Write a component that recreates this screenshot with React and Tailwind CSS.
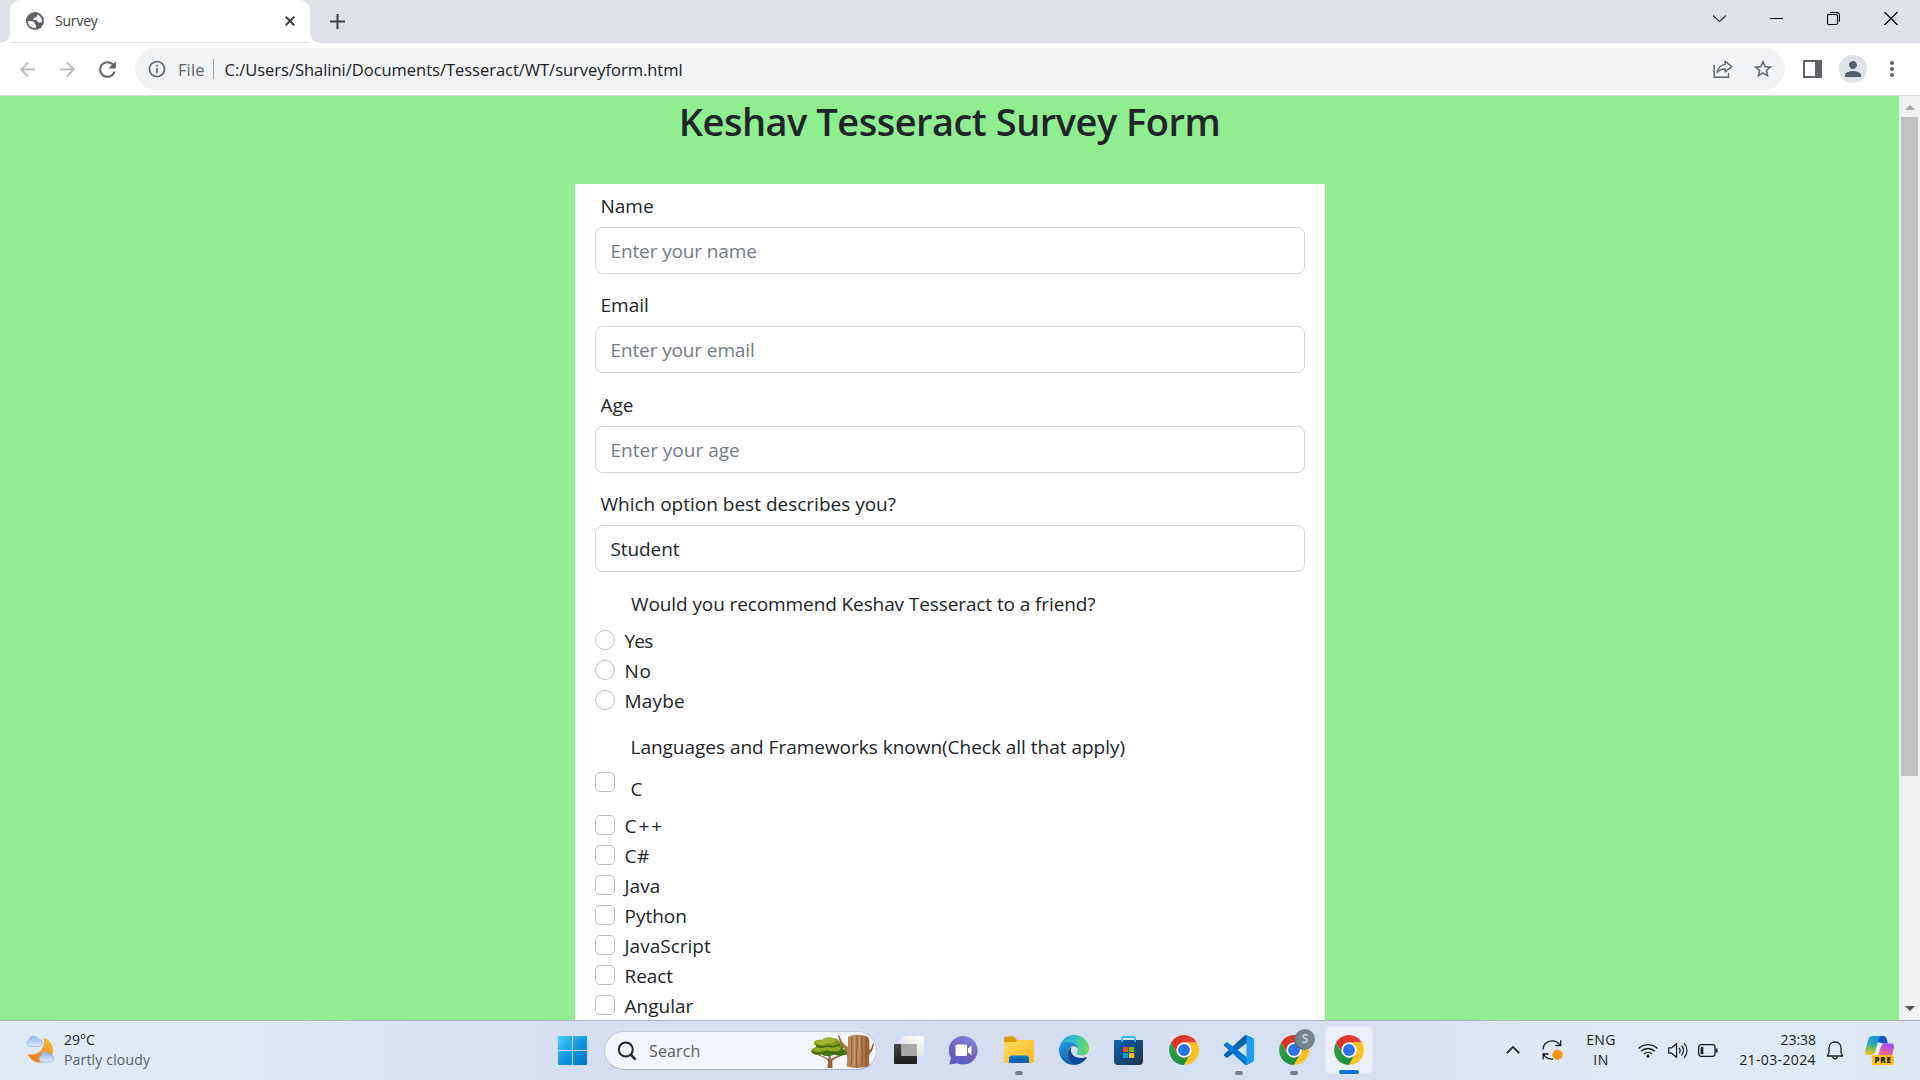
import React from 'react';
import {
  MdArrowBack,
  MdArrowForward,
  MdInfoOutline,
  MdMoreVert,
  MdPerson,
  MdRefresh,
  MdStarBorder,
} from 'react-icons/md';

function GlobeIcon() {
  return (
    <svg width="18" height="18" viewBox="0 0 18 18">
      <circle cx="9" cy="9" r="9" fill="#5f6368" />
      <path d="M10.500 2.200c.3 1.800-.3 2.700-1.900 2.900-.3 1.300-1.300 1.300-2 1.500.2 1.200 1 1.500 2.600 1.600 1.800.2 2.400 1.200 2.400 2.300h1.600c1.300 0 2-.5 2.600-.2-.6 3-3 5.300-6.100 5.600.3-1.400-.4-2-1-2.600-.8-.9-.4-2-.9-2.700C6.600 9.500 4.500 9.500 2 9.300 1.800 5.800 4.200 2.500 7.500 2c1-.2 2-.1 3 .2z" fill="#fff" opacity=".0" />
      <path d="M2 9.200c1.800-.2 3.800 0 5.300.4 1.500.5 1 2 2 2.800.8.6 1 1.800.4 3.500C5.500 16.300 2 13.200 2 9.200z" fill="#fff" />
      <path d="M11 2.400c.8 1.500-.2 2.900-2.200 2.900-.2 1.200-1 1.200-1.900 1.400.3 1 1.200 1.200 2.600 1.200 1.700 0 2.400 1.100 2.500 2.300.9.300 2.800.5 3.800-.1.600-3.600-1.500-6.700-4.800-7.700z" fill="#fff" />
    </svg>
  );
}

function TabStrip() {
  return (
    <div className="flex h-[43px] shrink-0 items-stretch bg-[#dee1e6]">
      <div className="flex w-[10px] items-end">
        <svg width="10" height="10" viewBox="0 0 10 10">
          <path d="M10 0v10H0A10 10 0 0 0 10 0z" fill="#fff" />
        </svg>
      </div>
      <div className="flex h-[42px] w-[300px] items-center rounded-t-[10px] bg-white pl-[16px] pr-[13px]">
        <GlobeIcon />
        <span className="ml-[11px] flex-1 pb-px text-[14px] leading-[20px] tracking-[-0.2px] text-[#3c4043]">Survey</span>
        <svg width="14" height="14" viewBox="0 0 14 14" stroke="#3c4043" strokeWidth="2">
          <path d="M2.800 2.800l8.400 8.400M11.200 2.800l-8.400 8.400" />
        </svg>
      </div>
      <div className="flex w-[20px] items-end">
        <svg width="10" height="10" viewBox="0 0 10 10">
          <path d="M0 0v10h10A10 10 0 0 1 0 0z" fill="#fff" />
        </svg>
      </div>
      <svg className="self-center" width="15" height="15" viewBox="0 0 15 15" stroke="#3c4043" strokeWidth="2">
        <path d="M7.500 0v15M0 7.500h15" />
      </svg>
      <div className="ml-auto flex h-[37px] items-center gap-[44px] pr-[22px]">
        <svg width="13" height="13" viewBox="0 0 13 13" fill="none" stroke="#222" strokeWidth="1.100">
          <path d="M0 3.400l6.500 6.200L13 3.400" />
        </svg>
        <svg width="13" height="13" viewBox="0 0 13 13" stroke="#000" strokeWidth="1">
          <path d="M0 6.500h13" />
        </svg>
        <svg width="13" height="13" viewBox="0 0 13 13" fill="none" stroke="#000" strokeWidth="1.100">
          <rect x=".5" y="2.500" width="10" height="10" rx="1.500" />
          <path d="M3 .5h6.500a3 3 0 0 1 3 3v6.300" />
        </svg>
        <svg width="14" height="13" viewBox="0 0 13 13" stroke="#000" strokeWidth="1.200">
          <path d="M0 0l13 13M13 0L0 13" />
        </svg>
      </div>
    </div>
  );
}

function Toolbar() {
  return (
    <div className="flex h-[53px] shrink-0 items-start border-b border-[#d5d7db] bg-white pt-[5px]">
      <div className="flex h-[42px] w-[135px] items-center gap-[17px] pl-[16px]">
        <MdArrowBack className="size-[23px] text-[#babcbe]" />
        <MdArrowForward className="size-[23px] text-[#babcbe]" />
        <MdRefresh className="-ml-px size-[25px] text-[#5f6368]" />
      </div>
      <div className="flex h-[42px] w-[1650px] items-center rounded-full bg-[#f1f3f4] pl-[12px] pr-[11px]">
        <MdInfoOutline className="size-[20px] text-[#5f6368]" />
        <span className="ml-[11px] pt-px text-[16.5px] leading-[22px] tracking-[0.1px] text-[#5f6368]">File</span>
        <div className="ml-[8px] h-[20px] w-px bg-[#9aa0a6]" />
        <span className="ml-[11px] flex-1 pt-px text-[16.5px] leading-[22px] tracking-[-0.02px] text-[#202124]">
          C:/Users/Shalini/Documents/Tesseract/WT/surveyform.html
        </span>
        <svg width="20" height="20" viewBox="0 0 20 20" fill="none" stroke="#5f6368" strokeWidth="1.400">
          <path d="M1.200 6v12.300h14.300V14" />
          <path d="M12.200 2.200l6.500 5.400-6.500 5.400V10c-3.600 0-6 1-8 3.600.7-4.200 3.200-7.500 8-8.200z" strokeLinejoin="round" />
        </svg>
        <MdStarBorder className="ml-[19px] size-[22px] text-[#5f6368]" />
      </div>
      <div className="flex h-[42px] flex-1 items-center pl-[18px]">
        <div className="h-[18px] w-[19px] border-2 border-r-[7px] border-[#5f6368]" />
        <div className="ml-[17px] flex size-[28px] items-center justify-center rounded-full bg-[#dee1e6]">
          <MdPerson className="size-[24px] text-[#53606f]" />
        </div>
        <MdMoreVert className="ml-[13px] size-[24px] text-[#5f6368]" />
      </div>
    </div>
  );
}

const FIELDS = [
  { label: 'Name', text: 'Enter your name', tone: 'text-[#737b83] tracking-[-0.12px]' },
  { label: 'Email', text: 'Enter your email', tone: 'text-[#737b83] tracking-[-0.12px]' },
  { label: 'Age', text: 'Enter your age', tone: 'text-[#737b83]' },
  { label: 'Which option best describes you?', text: 'Student', tone: 'text-[#212529] tracking-[-0.1px]' },
];

function Field({ label, text, tone }) {
  return (
    <div className="h-[99.5px]">
      <div className="pl-[6px]">{label}</div>
      <div className={`mt-[6px] flex h-[47px] items-center rounded-[7.5px] border border-[#ced4da] pl-[15px] pt-px ${tone}`}>
        {text}
      </div>
    </div>
  );
}

function Choice({ label, shape, tracking = '' }) {
  return (
    <div className="flex h-[30px]">
      <div className={`mt-[4px] size-[20px] border border-[#bfbfbf] bg-white ${shape}`} />
      <span className={`ml-[10px] ${tracking}`}>{label}</span>
    </div>
  );
}

const LANGUAGES = [
  ['C++', 'tracking-[2px]'],
  ['C#', 'tracking-[0.500px]'],
  ['Java', ''],
  ['Python', ''],
  ['JavaScript', ''],
  ['React', 'tracking-[-0.100px]'],
  ['Angular', ''],
];

function Page() {
  return (
    <div className="flex min-h-0 flex-1">
      <div className="flex flex-1 flex-col items-center overflow-hidden bg-[#90ee90]">
        <h1 className="mt-px h-[48px] shrink-0 text-[38px] font-semibold leading-[48px] tracking-[-0.500px] text-[#212529]">
          Keshav Tesseract Survey Form
        </h1>
        <div className="mt-[39px] h-[900px] w-[750px] shrink-0 bg-white px-[20px] pt-[6.600px] text-[19px] leading-[30px] text-[#212529]">
          {FIELDS.map((f) => (
            <Field key={f.label} {...f} />
          ))}
          <div className="mt-[0.400px] pl-[36.500px] tracking-[-0.100px]">Would you recommend Keshav Tesseract to a friend?</div>
          <div className="mt-[7px]">
            <Choice label="Yes" shape="rounded-full" tracking="tracking-[-0.800px]" />
            <Choice label="No" shape="rounded-full" tracking="tracking-[0.800px]" />
            <Choice label="Maybe" shape="rounded-full" tracking="tracking-[0.200px]" />
          </div>
          <div className="mt-[16px] pl-[36px] tracking-[-0.020px]">Languages and Frameworks known(Check all that apply)</div>
          <div className="mt-[6px] flex h-[43px]">
            <div className="mt-[4px] size-[20px] rounded-[5px] border border-[#bfbfbf] bg-white" />
            <span className="ml-[16px] mt-[6px]">C</span>
          </div>
          {LANGUAGES.map(([name, tracking]) => (
            <Choice key={name} label={name} shape="rounded-[5px]" tracking={tracking} />
          ))}
        </div>
      </div>
      <div className="flex w-[21px] flex-col items-center bg-[#f1f1f1]">
        <svg className="mt-[9px] shrink-0" width="10" height="5" viewBox="0 0 10 5">
          <path d="M5 0l5 5H0z" fill="#a3a3a3" />
        </svg>
        <div className="mt-[7px] h-[659px] w-[17px] bg-[#c1c1c1]" />
        <svg className="mb-[9px] mt-auto shrink-0" width="10" height="5" viewBox="0 0 10 5">
          <path d="M0 0h10L5 5z" fill="#505050" />
        </svg>
      </div>
    </div>
  );
}

function WeatherIcon() {
  return (
    <svg width="31" height="29" viewBox="0 0 31 29">
      <defs>
        <linearGradient id="moon" x1="0.700" y1="0" x2="0.300" y2="1">
          <stop offset="0" stopColor="#f6bf3c" />
          <stop offset="1" stopColor="#f17a1c" />
        </linearGradient>
        <linearGradient id="cloud" x1="0" y1="0" x2="0" y2="1">
          <stop offset="0" stopColor="#94b4ee" />
          <stop offset="1" stopColor="#dce9fc" />
        </linearGradient>
      </defs>
      <path d="M18.500 2.500c6 2 10 7.500 9.500 13.500-.6 7-6.500 11.500-13 11.500-5.500 0-10-3.300-12.500-8.500 5.500 1.500 11-.3 14-4.500 2.500-3.500 3-7.800 2-12z" fill="url(#moon)" />
      <path d="M4 11.500a3.600 3.600 0 0 1 0-6.600 4.800 4.800 0 0 1 9-1 4 4 0 0 1 2 7.600z" fill="url(#cloud)" stroke="#8eaee8" strokeWidth=".6" />
      <path d="M16 27a3.500 3.500 0 0 1 0-6.400 4.800 4.800 0 0 1 9-1 4 4 0 0 1 2 7.400z" fill="url(#cloud)" stroke="#7fa3e4" strokeWidth=".6" />
    </svg>
  );
}

function WindowsIcon() {
  return (
    <svg width="29" height="29" viewBox="0 0 29 29">
      <defs>
        <linearGradient id="win" x1="0" y1="0" x2="29" y2="29" gradientUnits="userSpaceOnUse">
          <stop offset="0" stopColor="#4ad0fb" />
          <stop offset=".55" stopColor="#1093e0" />
          <stop offset="1" stopColor="#0272cd" />
        </linearGradient>
      </defs>
      <path d="M1 0h13v14H0V1a1 1 0 0 1 1-1zM15 0h13a1 1 0 0 1 1 1v13H15zM0 15h14v14H1a1 1 0 0 1-1-1zM15 15h14v13a1 1 0 0 1-1 1H15z" fill="url(#win)" />
    </svg>
  );
}

function TreesIcon() {
  return (
    <svg width="64" height="34" viewBox="0 0 64 34">
      <defs>
        <linearGradient id="leaf" x1="0" y1="0" x2="0.200" y2="1">
          <stop offset="0" stopColor="#a5b52c" />
          <stop offset="1" stopColor="#47720b" />
        </linearGradient>
        <linearGradient id="bark" x1="0" y1="0" x2="1" y2="0">
          <stop offset="0" stopColor="#8c5c35" />
          <stop offset=".35" stopColor="#c08c5c" />
          <stop offset=".7" stopColor="#ae7848" />
          <stop offset="1" stopColor="#7c4d2b" />
        </linearGradient>
      </defs>
      <path d="M7.500 21c5 2.500 9 3 10.500 6l-.5 7h5l-.3-7c2-3 7-3.500 12-6.500l-.6-1c-5 2.500-9.500 3-12.500 5.500l-1-4h-1.500l-.5 4c-3-2.500-6-3-10.500-5z" fill="#9b6438" />
      <path d="M4 8c2-2 4-2.500 8-2 2-3 7-3.500 11-2 4 0 6 2 7.500 5 3 1 3.500 4 2.500 6l5 1c2 3-1 5-4 5-4 1.500-8 .5-10-.5-4 2-9 2-12 0-4 1-8 .5-10-1.500-2-2.500 0-4.500 2-5 2-1 3.500-1.500 3-2.500C4 11 3 10 4 8z" fill="url(#leaf)" />
      <path d="M5 8c3-2 6-.5 8-2 4-3 9-2 12 1 0 3-5 3-8 2-4 3-9 2-12-1zM2 16c3-3 8-2 11-2 4-3 9-2 13-2 3 0 5 2 4 4-5 2-10 1-13 0-5 2-11 3-15 0z" fill="#b1c436" opacity=".6" />
      <path d="M6 11.500c5 2.500 9 1.500 12 .5 4 1.500 8 1 12-1.500M3 18.500c6 2 10 1 14-1 6 2 12 2 17-.5" stroke="#45670b" strokeWidth="1.500" fill="none" />
      <path d="M29 1c2 5 3 8 9 12V3c4-3 14-3 20 0 2 3 1 8 1.500 13 2-1 2.500-4 3.500-7l.8.5c-.5 5-1.800 8-4.600 11-.4 6 .8 9-1 12-7 2-16 1.800-21.500 0 .8-6 .5-11-.2-16-4.500-4-7-8-8.500-15z" fill="url(#bark)" />
      <path d="M42 3c-1 8 1 18-1 29M47 2c1 9-2 20 0 31M52 2c-1 10 2 18-1 30M56 4c1 9-1 15 0 27" stroke="#7d4f2c" strokeWidth=".8" fill="none" />
      <path d="M44.500 3c-1 8 1 18-1 29M49.500 3c1 9-2 18 0 28" stroke="#dcae7e" strokeWidth=".7" fill="none" />
    </svg>
  );
}

function TaskViewIcon() {
  return (
    <svg width="30" height="30" viewBox="0 0 30 30">
      <defs>
        <linearGradient id="tvd" x1="0" y1="0" x2="0" y2="1">
          <stop offset="0" stopColor="#474747" />
          <stop offset="1" stopColor="#1b1b1b" />
        </linearGradient>
        <linearGradient id="tvl" x1="1" y1="0" x2="0.300" y2="1">
          <stop offset="0" stopColor="#fff" />
          <stop offset="1" stopColor="#dcdcdc" />
        </linearGradient>
      </defs>
      <rect x="0" y="9" width="23" height="20" rx="1" fill="url(#tvd)" />
      <rect x="7.500" y="1" width="22.500" height="20" rx="1" fill="url(#tvl)" />
      <path d="M7.500 9H22a1 1 0 0 1 1 1v11H8.500a1 1 0 0 1-1-1z" fill="#a8a8a8" />
    </svg>
  );
}

function ChatIcon() {
  return (
    <svg width="29" height="29" viewBox="0 0 29 29">
      <defs>
        <linearGradient id="chat" x1="0.800" y1="0" x2="0.300" y2="1">
          <stop offset="0" stopColor="#7f8be4" />
          <stop offset=".45" stopColor="#7a68bb" />
          <stop offset="1" stopColor="#5558c4" />
        </linearGradient>
      </defs>
      <path d="M14.500 0a14.300 14.300 0 1 1-6.300 27.200L.5 28.500l1.400-6.800A14.300 14.300 0 0 1 14.500 0z" fill="url(#chat)" />
      <rect x="6.500" y="8.500" width="11.500" height="11.500" rx="1.500" fill="#fff" />
      <path d="M19 12.500l3.500-3v9.800l-3.500-3z" fill="#fff" />
    </svg>
  );
}

function FolderIcon() {
  return (
    <svg width="30" height="28" viewBox="0 0 30 28">
      <defs>
        <linearGradient id="fold" x1="0" y1="0" x2="1" y2="1">
          <stop offset="0" stopColor="#ffdc63" />
          <stop offset="1" stopColor="#f8b91c" />
        </linearGradient>
        <linearGradient id="foldb" x1="0" y1="0" x2="0" y2="1">
          <stop offset="0" stopColor="#127ccb" />
          <stop offset="1" stopColor="#0d62ac" />
        </linearGradient>
      </defs>
      <path d="M0 2a1.500 1.500 0 0 1 1.500-1.500H10L13 4h15.500A1.500 1.500 0 0 1 30 5.500V12H0z" fill="#dd9d07" />
      <path d="M0 6h11.500L14 4h14.500A1.500 1.500 0 0 1 30 5.500v20a1.500 1.500 0 0 1-1.500 1.500h-27A1.500 1.500 0 0 1 0 25.500z" fill="url(#fold)" />
      <path d="M5 27v-4.500a3 3 0 0 1 3-3h14a3 3 0 0 1 3 3V27z" fill="url(#foldb)" />
      <path d="M8.500 23.300h13" stroke="#0a4784" strokeWidth="1" />
    </svg>
  );
}

function EdgeIcon() {
  return (
    <svg width="30" height="30" viewBox="0 0 30 30">
      <defs>
        <linearGradient id="edgeTop" x1="0" y1="0.400" x2="1" y2="0.500">
          <stop offset="0" stopColor="#2aa5dd" />
          <stop offset=".45" stopColor="#2fc0cf" />
          <stop offset="1" stopColor="#6ddd55" />
        </linearGradient>
        <linearGradient id="edgeLeft" x1="0" y1="0" x2="0.400" y2="1">
          <stop offset="0" stopColor="#2a9fe0" />
          <stop offset="1" stopColor="#0c5fae" />
        </linearGradient>
      </defs>
      <path d="M.6 11.500C2.500 4.800 8 0 15 0c8.500 0 15 6 15 13.500 0 4.500-3.200 7-7.200 7-3.400 0-5.300-1.200-5.300-2.500 0-1 1.500-1.600 1.500-4C19 11 15.500 8 10.500 8 6 8 2.500 9.500.6 11.500z" fill="url(#edgeTop)" />
      <path d="M0 15c0-4.500 4-8 9.500-8 5.600 0 9.500 3.300 9.500 7-.2 0-1.400-2.700-4.500-2.700-3.400 0-6 3.500-6 7.700 0 5.800 4.200 9.800 8.500 10.700-9.500 1.400-17-5.700-17-14.700z" fill="url(#edgeLeft)" />
      <path d="M12.500 12c-2.400 1.200-3.900 3.600-3.900 7 0 5.500 3.900 11 9.400 10.700 4.500-1 7.800-3.500 9.700-6.900.4-.7-.2-1.100-.8-.8-1.300.7-3 1.100-4.800 1.100-5.800 0-10.300-3.600-10.300-8 0-1.200.3-2.200.7-3.100z" fill="#11499a" />
    </svg>
  );
}

function StoreIcon() {
  return (
    <svg width="29" height="30" viewBox="0 0 29 30">
      <defs>
        <linearGradient id="store" x1="0" y1="0" x2="1" y2="1">
          <stop offset="0" stopColor="#0c64b0" />
          <stop offset="1" stopColor="#20304f" />
        </linearGradient>
      </defs>
      <path d="M0 6a1 1 0 0 1 1-1h27a1 1 0 0 1 1 1v20a4 4 0 0 1-4 4H4a4 4 0 0 1-4-4z" fill="url(#store)" />
      <path d="M8 7V3.300A1.300 1.300 0 0 1 9.300 2h10.400A1.300 1.300 0 0 1 21 3.300V7" fill="none" stroke="#35c1f1" strokeWidth="1.800" />
      <path fill="#f25022" d="M9 12h5.200v5H9z" />
      <path fill="#7fba00" d="M15 12h5.200v5H15z" />
      <path fill="#00a4ef" d="M9 18h5.200v5H9z" />
      <path fill="#ffb900" d="M15 18h5.200v5H15z" />
    </svg>
  );
}

function ChromeIcon() {
  return (
    <svg width="30" height="30" viewBox="0 0 48 48">
      <defs>
        <linearGradient id="chromeRed" x1="0" y1="0" x2="1" y2="0">
          <stop offset="0" stopColor="#d93025" />
          <stop offset="1" stopColor="#ea4335" />
        </linearGradient>
        <linearGradient id="chromeGreen" x1="0.700" y1="1" x2="0.200" y2="0">
          <stop offset="0" stopColor="#1e8e3e" />
          <stop offset="1" stopColor="#34a04c" />
        </linearGradient>
      </defs>
      <path d="M24 12h20.780A24 24 0 0 0 3.220 12L13.610 30A12 12 0 0 1 24 12z" fill="url(#chromeRed)" />
      <path d="M13.610 30L3.220 12A24 24 0 0 0 24 48l10.390-18A12 12 0 0 1 13.610 30z" fill="url(#chromeGreen)" />
      <path d="M34.390 30L24 48a24 24 0 0 0 20.780-36H24a12 12 0 0 1 10.390 18z" fill="#fcc31e" />
      <circle cx="24" cy="24" r="12" fill="#fff" />
      <circle cx="24" cy="24" r="9.500" fill="#2b74e8" />
    </svg>
  );
}

function CodeIcon() {
  return (
    <svg width="30" height="30" viewBox="0 0 100 100">
      <path d="M96.461 10.796 75.857.876a6.230 6.230 0 0 0-7.107 1.207l-67.451 61.500a4.167 4.167 0 0 0 .004 6.162l5.510 5.009a4.167 4.167 0 0 0 5.320.236l81.228-61.620c2.725-2.067 6.639-.124 6.639 3.297v-.240a6.250 6.250 0 0 0-3.539-5.630z" fill="#0065a9" />
      <path d="M96.461 89.204l-20.604 9.920a6.229 6.229 0 0 1-7.107-1.207l-67.451-61.500a4.167 4.167 0 0 1 .004-6.162l5.510-5.009a4.167 4.167 0 0 1 5.320-.236l81.228 61.620c2.725 2.067 6.639.124 6.639-3.297v.240a6.250 6.250 0 0 1-3.539 5.630z" fill="#007acc" />
      <path d="M75.858 99.126a6.232 6.232 0 0 1-7.108-1.210c2.306 2.307 6.250.674 6.250-2.588V4.672c0-3.262-3.944-4.895-6.250-2.589a6.232 6.232 0 0 1 7.108-1.210l20.600 9.908A6.250 6.250 0 0 1 100 16.413v67.174a6.250 6.250 0 0 1-3.541 5.633z" fill="#1f9cf0" />
    </svg>
  );
}

function CopilotIcon() {
  return (
    <svg width="29" height="28" viewBox="0 0 29 28">
      <defs>
        <linearGradient id="cpl" x1="0.500" y1="0" x2="0.300" y2="1">
          <stop offset="0" stopColor="#1b8fe8" />
          <stop offset=".45" stopColor="#2fb0a8" />
          <stop offset=".75" stopColor="#9cc04a" />
          <stop offset="1" stopColor="#f5c22b" />
        </linearGradient>
        <linearGradient id="cpr" x1="0.700" y1="0" x2="0.400" y2="1">
          <stop offset="0" stopColor="#9a4df0" />
          <stop offset=".5" stopColor="#e05bb0" />
          <stop offset="1" stopColor="#fb8a4a" />
        </linearGradient>
      </defs>
      <path d="M12 0h6c2 0 3 1 3.600 3l1.400 4.500h-5L13 6z" fill="#1450c8" />
      <path d="M7.500 0H17c-2.500.5-3.200 3-4 6l-3 10c-.7 2.300-2 3-4 3H3c-2.500 0-3.500-2-2.800-4.500l3-10.500C4 1.300 5.300 0 7.500 0z" fill="url(#cpl)" />
      <path d="M19 7.500h7c2.500 0 3.500 2 2.800 4.500L27 20l-8 4h-9c-2 0-3-1-3.500-4 3 0 5-1 6-4l2-6c.7-1.800 2.200-2.500 4.500-2.500z" fill="url(#cpr)" />
      <path d="M15 8h3c-1.500 1-2 2.500-2.500 4L13.500 18c-.5 1.200-1 1.700-2 2H9c1.500-1 1.800-2 2.300-3.500L13 11c.5-1.500 1-2.500 2-3z" fill="#fff" opacity=".9" />
    </svg>
  );
}

function TaskCell({ children, indicator }) {
  return (
    <div className="relative flex h-[58px] w-[55px] items-center justify-center">
      {children}
      {indicator && <div className="absolute bottom-[4px] left-[24px] h-[4px] w-[8px] rounded-full bg-[#7b7f88]" />}
    </div>
  );
}

function Tray() {
  return (
    <div className="flex flex-1 items-center text-[14px] leading-[20px] text-[#1b1b1b]">
      <svg className="ml-[133px]" width="14" height="8" viewBox="0 0 14 8" fill="none" stroke="#1b1b1b" strokeWidth="1.700">
        <path d="M.8 7.200L7 1l6.200 6.200" />
      </svg>
      <svg className="ml-[22px]" width="21" height="22" viewBox="0 0 21 22" fill="none" stroke="#1b1b1b" strokeWidth="1.300">
        <path d="M1 10.500C1 5.500 5 1.800 9.800 1.800c3.700 0 6.700 1.700 8.200 4.700M18.700 1.200v5.500h-5.500M6.500 15H1.200v5.500M1.700 15.300C3.200 18.700 6.500 20.300 11 20" />
        <circle cx="15.500" cy="15.800" r="5.100" fill="#ff9800" stroke="none" />
      </svg>
      <div className="ml-[14px] w-[48px] text-center">
        <div className="tracking-[0.400px]">ENG</div>
        <div className="tracking-[0.500px]">IN</div>
      </div>
      <svg className="ml-[13px]" width="20" height="15" viewBox="0 0 20 15" fill="none" stroke="#1b1b1b" strokeWidth="1.400">
        <path d="M.6 5.500c5.200-5.200 13.600-5.200 18.800 0M3.300 8.300c3.700-3.700 9.700-3.700 13.400 0M6 11c2.200-2.200 5.800-2.200 8 0" />
        <circle cx="10" cy="13" r="1.600" fill="#1b1b1b" stroke="none" />
      </svg>
      <svg className="ml-[10px]" width="20" height="17" viewBox="0 0 20 17" fill="none" stroke="#1b1b1b" strokeWidth="1.200">
        <path d="M.7 5.800h3L8.600 1.500v14L3.700 11.200h-3z" strokeLinejoin="round" />
        <path d="M11 5.800c1.300 1.500 1.300 3.900 0 5.400M13.500 3.500c2.600 2.900 2.600 7.100 0 10M16 1.200c4 4.200 4 10.400 0 14.600" />
      </svg>
      <svg className="ml-[10px]" width="20" height="13" viewBox="0 0 20 13" fill="none" stroke="#1b1b1b" strokeWidth="1.300">
        <rect x=".7" y=".7" width="16.300" height="11.600" rx="2.500" />
        <path d="M18.600 4.500v4" strokeWidth="2" />
        <rect x="2.700" y="2.800" width="2.600" height="7.400" fill="#1b1b1b" stroke="none" />
      </svg>
      <div className="w-[98px] pb-px text-right">
        <div className="tracking-[-0.050px]">23:38</div>
        <div className="tracking-[0.380px]">21-03-2024</div>
      </div>
      <svg className="ml-[10px]" width="18" height="19" viewBox="0 0 18 19" fill="none" stroke="#1b1b1b" strokeWidth="1.300">
        <path d="M9 1c-3.700 0-6 2.600-6 6v4.500L1.300 15h15.400L15 11.500V7c0-3.400-2.300-6-6-6z" strokeLinejoin="round" />
        <path d="M6.700 15.300c.2 1.500 1.100 2.500 2.300 2.500s2.100-1 2.300-2.500" />
      </svg>
      <div className="relative ml-[21px]">
        <CopilotIcon />
        <div className="absolute left-[7px] top-[19px] flex h-[10px] w-[22px] items-center justify-center rounded-[2px] bg-[#ffc20e] text-[8px] font-extrabold leading-[10px] tracking-[0.700px] text-[#221a00]">
          PRE
        </div>
      </div>
    </div>
  );
}

function Taskbar() {
  return (
    <div className="flex h-[60px] shrink-0 items-start border-t border-[#b0b5c3] bg-[linear-gradient(90deg,#e0ebf5_0%,#dfe9f5_14%,#d8e2f2_22%,#d6def2_30%,#d4dff4_35%,#d5def3_45%,#d8dcf0_52%,#d5dff1_60%,#d5e1f3_66%,#dadff0_73%,#dee6f4_78%,#e0eaf5_88%,#dce9f5_100%)]">
      <div className="flex h-[56px] w-[545px] items-center pl-[25px]">
        <WeatherIcon />
        <div className="ml-[7px] pt-[2px] text-[14px] leading-[20px]">
          <div className="pl-px text-[#1b1b1b]">29°C</div>
          <div className="pl-px tracking-[0.170px] text-[#5a5f66]">Partly cloudy</div>
        </div>
      </div>
      <TaskCell>
        <WindowsIcon />
      </TaskCell>
      <div className="ml-[4px] mt-[10px] flex h-[39px] w-[273px] items-center rounded-full border border-[#c3cadc] border-b-[#a9b2c6] bg-[#f3f6fc] pl-[12px]">
        <svg width="20" height="20" viewBox="0 0 20 20" fill="none" stroke="#242424" strokeWidth="2">
          <circle cx="8.800" cy="8.500" r="7" />
          <path d="M13.600 13.600l5 5" strokeWidth="2.400" />
        </svg>
        <span className="ml-[12px] flex-1 text-[16px] leading-[22px] tracking-[0.130px] text-[#5c5c60]">Search</span>
        <div className="mr-[2px]">
          <TreesIcon />
        </div>
      </div>
      <div className="ml-[4px] flex">
        <TaskCell>
          <TaskViewIcon />
        </TaskCell>
        <TaskCell>
          <ChatIcon />
        </TaskCell>
        <TaskCell indicator>
          <FolderIcon />
        </TaskCell>
        <TaskCell>
          <EdgeIcon />
        </TaskCell>
        <TaskCell>
          <StoreIcon />
        </TaskCell>
        <TaskCell>
          <ChromeIcon />
        </TaskCell>
        <TaskCell indicator>
          <CodeIcon />
        </TaskCell>
        <TaskCell indicator>
          <ChromeIcon />
          <div className="absolute left-[29px] top-[8px] flex size-[20px] items-center justify-center rounded-full bg-[#73858e] text-[12px] font-semibold leading-none text-[#cfd8dc] shadow-[-1px_1px_0_#566870]">
            S
          </div>
        </TaskCell>
        <div className="relative ml-[4px] mt-[5px] flex h-[48px] w-[48px] items-center justify-center rounded-[5px] border border-[#e3e6f2] bg-[#eceff8]">
          <ChromeIcon />
          <div className="absolute bottom-[-1px] left-[13px] h-[4px] w-[20px] rounded-full bg-[#0a78d4]" />
        </div>
      </div>
      <div className="flex h-[58px] flex-1">
        <Tray />
      </div>
    </div>
  );
}

export default function App() {
  return (
    <div className="flex h-[1080px] w-[1920px] flex-col overflow-hidden whitespace-nowrap bg-white font-['Open_Sans','Noto_Sans',sans-serif]">
      <TabStrip />
      <Toolbar />
      <Page />
      <Taskbar />
    </div>
  );
}
